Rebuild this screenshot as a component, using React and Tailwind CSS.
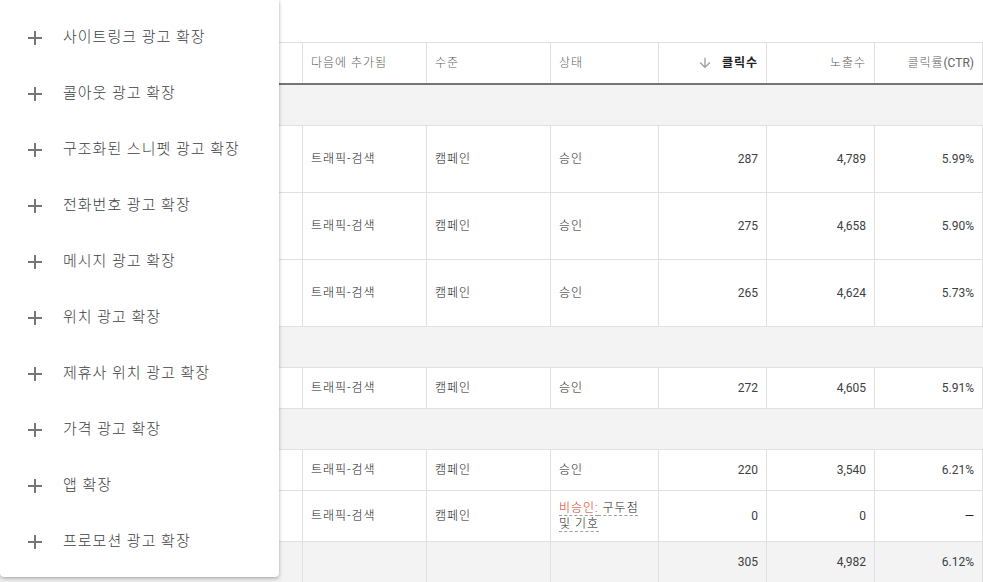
import { useState } from "react"

const menuItems = [
    "사이트링크 광고 확장",
    "콜아웃 광고 확장",
    "구조화된 스니펫 광고 확장",
    "전화번호 광고 확장",
    "메시지 광고 확장",
    "위치 광고 확장",
    "제휴사 위치 광고 확장",
    "가격 광고 확장",
    "앱 확장",
    "프로모션 광고 확장",
]

const rows = [
    { type: "section" },
    { type: "data", h: "h-[66px]", clicks: "287", impr: "4,789", ctr: "5.99%" },
    { type: "data", h: "h-[66px]", clicks: "275", impr: "4,658", ctr: "5.90%" },
    { type: "data", h: "h-[66px]", clicks: "265", impr: "4,624", ctr: "5.73%" },
    { type: "section" },
    { type: "data", h: "h-10", clicks: "272", impr: "4,605", ctr: "5.91%" },
    { type: "section" },
    { type: "data", h: "h-10", clicks: "220", impr: "3,540", ctr: "6.21%" },
    { type: "data", h: "h-[50px]", clicks: "0", impr: "0", ctr: "—", disapproved: true },
]

const grid = "grid grid-cols-[303px_124px_124px_108px_108px_108px_108px]"
const cell = "flex items-center border-r border-[#e0e0e0] px-2"
const kr = "tracking-[1px] font-light"

function PlusIcon() {
    return (
        <svg width="24" height="24" viewBox="0 0 24 24" className="shrink-0 fill-[#757575]">
            <path d="M19 13h-6v6h-2v-6H5v-2h6V5h2v6h6v2z" />
        </svg>
    )
}

function ArrowDown() {
    return (
        <svg width="16" height="16" viewBox="0 0 24 24" className="fill-[#9e9e9e]">
            <path d="M20 12l-1.41-1.41L13 16.17V4h-2v12.17l-5.58-5.59L4 12l8 8 8-8z" />
        </svg>
    )
}

function AddMenu() {
    const [hovered, setHovered] = useState(null)

    return (
        <div className="absolute top-0 left-0 z-10 w-[279px] rounded-b bg-white pt-[10px] pb-[7px] shadow-[0_2px_4px_rgba(0,0,0,0.25),0_0_2px_rgba(0,0,0,0.15)]">
            {menuItems.map((item, i) => (
                <div
                    key={item}
                    onMouseEnter={() => setHovered(i)}
                    onMouseLeave={() => setHovered(null)}
                    className={`flex h-14 cursor-pointer items-center gap-4 pl-[23px] text-[15px] text-[#3c4043] ${
                        hovered === i ? "bg-[#f5f5f5]" : ""
                    }`}
                >
                    <PlusIcon />
                    <span className={kr}>{item}</span>
                </div>
            ))}
        </div>
    )
}

export default function App() {
    return (
        <div className="relative h-[582px] w-[983px] overflow-hidden bg-white font-['Roboto','Noto_Sans_CJK_KR',sans-serif] text-xs text-[#212121]">
            <div className="h-[42px]"></div>

            <div className="border-t border-[#e0e0e0]">
                {/* header */}
                <div className={`${grid} h-[42px] border-b-2 border-[#757575] text-[#616161]`}>
                    <div className={cell}></div>
                    <div className={`${cell} ${kr}`}>다음에 추가됨</div>
                    <div className={`${cell} ${kr}`}>수준</div>
                    <div className={`${cell} ${kr}`}>상태</div>
                    <div className={`${cell} justify-end gap-[9px] font-bold text-[#212121]`}>
                        <ArrowDown />
                        <span className="tracking-[1px]">클릭수</span>
                    </div>
                    <div className={`${cell} justify-end ${kr}`}>노출수</div>
                    <div className={`${cell} justify-end`}>
                        <span className={kr}>클릭률</span>(CTR)
                    </div>
                </div>

                {rows.map((row, i) =>
                    row.type === "section" ? (
                        <div key={i} className="h-[41px] border-b border-[#e0e0e0] bg-[#f3f3f3]"></div>
                    ) : (
                        <div key={i} className={`${grid} ${row.h} box-content border-b border-[#e0e0e0]`}>
                            <div className={cell}></div>
                            <div className={`${cell} ${kr}`}>트래픽-검색</div>
                            <div className={`${cell} ${kr}`}>캠페인</div>
                            <div className={`${cell} ${kr}`}>
                                {row.disapproved ? (
                                    <span className="leading-4 underline decoration-[#9e9e9e] decoration-dashed underline-offset-[3px]">
                                        <span className="text-[#d93025]">비승인:</span> 구두점
                                        <br />및 기호
                                    </span>
                                ) : (
                                    "승인"
                                )}
                            </div>
                            <div className={`${cell} justify-end text-[#3c4043]`}>{row.clicks}</div>
                            <div className={`${cell} justify-end text-[#3c4043]`}>{row.impr}</div>
                            <div
                                className={`${cell} justify-end ${
                                    row.disapproved ? "text-[#212121]" : "text-[#3c4043]"
                                }`}
                            >
                                {row.ctr}
                            </div>
                        </div>
                    )
                )}

                {/* total */}
                <div className={`${grid} h-10 bg-[#f3f3f3] text-[#3c4043]`}>
                    <div className={cell}></div>
                    <div className={cell}></div>
                    <div className={cell}></div>
                    <div className={cell}></div>
                    <div className={`${cell} justify-end`}>305</div>
                    <div className={`${cell} justify-end`}>4,982</div>
                    <div className={`${cell} justify-end`}>6.12%</div>
                </div>
            </div>

            <AddMenu />
        </div>
    )
}
